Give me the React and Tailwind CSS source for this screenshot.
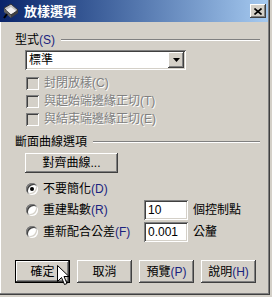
import React from 'react';

const font = "font-['Liberation_Sans','Noto_Sans_CJK_TC',sans-serif]";
const raised =
  'bg-[#d4d0c8] shadow-[inset_-1px_-1px_#404040,inset_1px_1px_#fff,inset_-2px_-2px_#808080]';
const sunken =
  'shadow-[inset_1px_1px_#808080,inset_-1px_-1px_#fff,inset_2px_2px_#404040,inset_-2px_-2px_#d4d0c8]';
const disabled = 'text-[#808080] [text-shadow:1px_1px_0_#fff]';

const GroupHeader = ({ children }) => (
  <div className="flex items-center h-[14px] pr-[10px]">
    <span className="whitespace-nowrap">{children}</span>
    <div className="flex-1 ml-[6px] h-[2px] border-t border-t-[#808080] border-b border-b-white" />
  </div>
);

const Checkbox = ({ label }) => (
  <div className="flex items-center h-[18px] pl-[11px]">
    <span className={`w-[13px] h-[13px] bg-[#d4d0c8] ${sunken}`} />
    <span className={`ml-[5px] ${disabled}`}>{label}</span>
  </div>
);

const Radio = ({ checked }) => (
  <span className="relative w-[12px] h-[12px] rounded-full bg-white shadow-[inset_1px_1px_#808080,inset_-1px_-1px_#fff,inset_2px_2px_#404040,inset_-2px_-2px_#d4d0c8] flex items-center justify-center">
    {checked && <span className="w-[4px] h-[4px] rounded-full bg-black" />}
  </span>
);

const Button = ({ children, isDefault }) => (
  <div
    className={`w-[55px] h-[23px] flex items-center justify-center ${
      isDefault
        ? 'bg-[#d4d0c8] shadow-[inset_0_0_0_1px_#000,inset_-2px_-2px_#404040,inset_2px_2px_#fff,inset_-3px_-3px_#808080]'
        : raised
    }`}
  >
    {children}
  </div>
);

export default function App() {
  return (
    <div className={`w-[272px] h-[297px] bg-[#d4d0c8] text-[12px] text-black leading-none ${font}`}>
      <div className="relative w-[270px] h-[295px] bg-[#d4d0c8] shadow-[inset_-1px_-1px_#404040,inset_-2px_-2px_#808080,inset_1px_0_#fff] flex flex-col">
        {/* Title bar */}
        <div className="mr-[2px] h-[22px] flex items-center bg-gradient-to-r from-[#0a246a] to-[#a6caf0]">
          <svg width="18" height="18" viewBox="0 0 18 18" className="ml-[2px]">
            <path d="M2 6 L9 2 L16 8 L9 13 Z" fill="#c0c0c0" stroke="#303030" strokeWidth="1" />
            <path d="M4 8 L9 5 L14 9 L9 12 Z" fill="#f0f0f0" />
            <path d="M2 6 L2 10 L9 16 L9 13 Z" fill="#606060" />
            <path d="M9 13 L9 16 L16 11 L16 8 Z" fill="#404040" />
            <path d="M5 12 L2 16" stroke="#000" strokeWidth="2" />
          </svg>
          <span className="ml-[4px] text-white font-bold text-[13px]">放樣選項</span>
          <div className={`ml-auto mr-[2px] w-[16px] h-[14px] flex items-center justify-center ${raised}`}>
            <svg width="8" height="7" viewBox="0 0 8 7">
              <path d="M0.5 0.5 L7.5 6.5 M7.5 0.5 L0.5 6.5" stroke="#000" strokeWidth="1.6" />
            </svg>
          </div>
        </div>

        {/* Content */}
        <div className="pl-[15px] flex flex-col">
          <div className="mt-[11px]">
            <GroupHeader>
              型式<span className="text-[#1a237e]">(S)</span>
            </GroupHeader>
          </div>

          {/* Combo box */}
          <div className={`mt-[3px] ml-[10px] w-[161px] h-[20px] bg-white flex items-center ${sunken}`}>
            <span className="ml-[4px] flex-1">標準</span>
            <div className={`mr-[2px] w-[16px] h-[16px] flex items-center justify-center ${raised}`}>
              <svg width="7" height="4" viewBox="0 0 7 4">
                <path d="M0 0 L7 0 L3.5 4 Z" fill="#000" />
              </svg>
            </div>
          </div>

          <div className="mt-[4px] flex flex-col">
            <Checkbox label="封閉放樣(C)" />
            <Checkbox label="與起始端邊緣正切(T)" />
            <Checkbox label="與結束端邊緣正切(E)" />
          </div>

          <div className="mt-[7px]">
            <GroupHeader>斷面曲線選項</GroupHeader>
          </div>

          <div className={`mt-[4px] ml-[10px] w-[93px] h-[20px] flex items-center justify-center ${raised}`}>
            對齊曲線...
          </div>

          {/* Radios */}
          <div className="mt-[6px] flex flex-col">
            <div className="flex items-center h-[20px] pl-[11px]">
              <Radio checked />
              <span className="ml-[5px]">
                不要簡化<span className="text-[#1a237e]">(D)</span>
              </span>
            </div>
            <div className="flex items-center h-[22px] pl-[11px]">
              <div className="w-[118px] flex items-center">
                <Radio />
                <span className="ml-[5px]">
                  重建點數<span className="text-[#1a237e]">(R)</span>
                </span>
              </div>
              <div className={`w-[44px] h-[20px] bg-white flex items-center pl-[4px] ${sunken}`}>10</div>
              <span className="ml-[5px]">個控制點</span>
            </div>
            <div className="flex items-center h-[22px] pl-[11px]">
              <div className="w-[118px] flex items-center">
                <Radio />
                <span className="ml-[5px] whitespace-nowrap">
                  重新配合公差<span className="text-[#1a237e]">(F)</span>
                </span>
              </div>
              <div className={`w-[44px] h-[20px] bg-white flex items-center pl-[4px] ${sunken}`}>0.001</div>
              <span className="ml-[5px]">公釐</span>
            </div>
          </div>

          {/* Buttons */}
          <div className="mt-[17px] flex gap-[7px]">
            <Button isDefault>確定</Button>
            <Button>取消</Button>
            <Button>
              預覽<span className="text-[#1a237e]">(P)</span>
            </Button>
            <Button>
              說明<span className="text-[#1a237e]">(H)</span>
            </Button>
          </div>
        </div>

        {/* Mouse cursor */}
        <svg className="absolute left-[57px] top-[265px]" width="13" height="21" viewBox="0 0 13 21">
          <path
            d="M0.5 0.5 L0.5 16.5 L4.5 12.5 L7.5 19.5 L10 18.5 L7 11.5 L12 11.5 Z"
            fill="#fff"
            stroke="#000"
            strokeWidth="1"
          />
        </svg>
      </div>
    </div>
  );
}
